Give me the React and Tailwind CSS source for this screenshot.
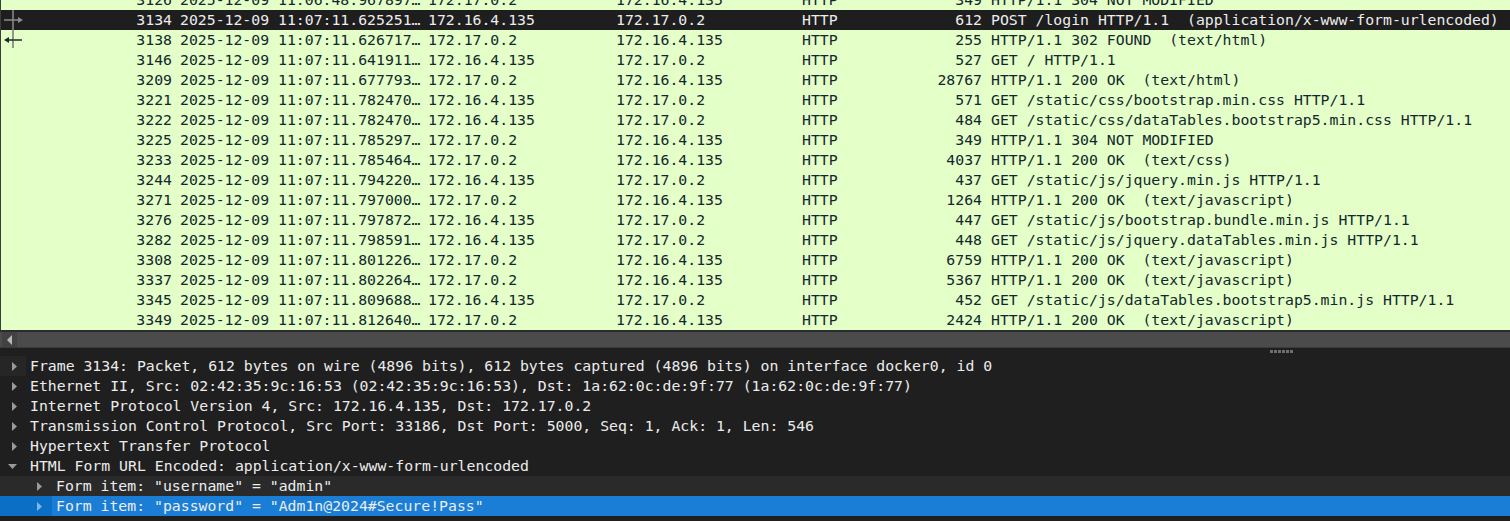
const MONO = "font-['DejaVu_Sans_Mono','Liberation_Mono',monospace] text-[14.8px]";

const A = "172.16.4.135";
const B = "172.17.0.2";

const packets = [
  { no: 3126, time: "2025-12-09 11:06:48.967897…", src: B, dst: A, len: 349, info: "HTTP/1.1 304 NOT MODIFIED" },
  { no: 3134, time: "2025-12-09 11:07:11.625251…", src: A, dst: B, len: 612, info: "POST /login HTTP/1.1  (application/x-www-form-urlencoded)", selected: true, mark: "out" },
  { no: 3138, time: "2025-12-09 11:07:11.626717…", src: B, dst: A, len: 255, info: "HTTP/1.1 302 FOUND  (text/html)", mark: "in" },
  { no: 3146, time: "2025-12-09 11:07:11.641911…", src: A, dst: B, len: 527, info: "GET / HTTP/1.1" },
  { no: 3209, time: "2025-12-09 11:07:11.677793…", src: B, dst: A, len: 28767, info: "HTTP/1.1 200 OK  (text/html)" },
  { no: 3221, time: "2025-12-09 11:07:11.782470…", src: A, dst: B, len: 571, info: "GET /static/css/bootstrap.min.css HTTP/1.1" },
  { no: 3222, time: "2025-12-09 11:07:11.782470…", src: A, dst: B, len: 484, info: "GET /static/css/dataTables.bootstrap5.min.css HTTP/1.1" },
  { no: 3225, time: "2025-12-09 11:07:11.785297…", src: B, dst: A, len: 349, info: "HTTP/1.1 304 NOT MODIFIED" },
  { no: 3233, time: "2025-12-09 11:07:11.785464…", src: B, dst: A, len: 4037, info: "HTTP/1.1 200 OK  (text/css)" },
  { no: 3244, time: "2025-12-09 11:07:11.794220…", src: A, dst: B, len: 437, info: "GET /static/js/jquery.min.js HTTP/1.1" },
  { no: 3271, time: "2025-12-09 11:07:11.797000…", src: B, dst: A, len: 1264, info: "HTTP/1.1 200 OK  (text/javascript)" },
  { no: 3276, time: "2025-12-09 11:07:11.797872…", src: A, dst: B, len: 447, info: "GET /static/js/bootstrap.bundle.min.js HTTP/1.1" },
  { no: 3282, time: "2025-12-09 11:07:11.798591…", src: A, dst: B, len: 448, info: "GET /static/js/jquery.dataTables.min.js HTTP/1.1" },
  { no: 3308, time: "2025-12-09 11:07:11.801226…", src: B, dst: A, len: 6759, info: "HTTP/1.1 200 OK  (text/javascript)" },
  { no: 3337, time: "2025-12-09 11:07:11.802264…", src: B, dst: A, len: 5367, info: "HTTP/1.1 200 OK  (text/javascript)" },
  { no: 3345, time: "2025-12-09 11:07:11.809688…", src: A, dst: B, len: 452, info: "GET /static/js/dataTables.bootstrap5.min.js HTTP/1.1" },
  { no: 3349, time: "2025-12-09 11:07:11.812640…", src: B, dst: A, len: 2424, info: "HTTP/1.1 200 OK  (text/javascript)" },
];

const details = [
  { text: "Frame 3134: Packet, 612 bytes on wire (4896 bits), 612 bytes captured (4896 bits) on interface docker0, id 0", gutter: true },
  { text: "Ethernet II, Src: 02:42:35:9c:16:53 (02:42:35:9c:16:53), Dst: 1a:62:0c:de:9f:77 (1a:62:0c:de:9f:77)" },
  { text: "Internet Protocol Version 4, Src: 172.16.4.135, Dst: 172.17.0.2" },
  { text: "Transmission Control Protocol, Src Port: 33186, Dst Port: 5000, Seq: 1, Ack: 1, Len: 546" },
  { text: "Hypertext Transfer Protocol" },
  { text: "HTML Form URL Encoded: application/x-www-form-urlencoded", open: true },
  { text: 'Form item: "username" = "admin"', child: true, soft: true },
  { text: 'Form item: "password" = "Adm1n@2024#Secure!Pass"', child: true, selected: true },
];

// related-packet marker drawn in the first column
function Marker({ kind }) {
  if (kind === "out") {
    return (
      <svg width="26" height="20" className="shrink-0">
        <line x1="12" y1="0" x2="12" y2="20" stroke="#8c8c8c" strokeWidth="1.5" />
        <line x1="3" y1="10" x2="18" y2="10" stroke="#8c8c8c" strokeWidth="1.5" />
        <path d="M17 7 L22 10 L17 13 Z" fill="#8c8c8c" />
      </svg>
    );
  }
  if (kind === "in") {
    return (
      <svg width="26" height="20" className="shrink-0">
        <line x1="12" y1="0" x2="12" y2="18" stroke="#6e7a76" strokeWidth="1.5" />
        <line x1="5" y1="10" x2="21" y2="10" stroke="#1b2a2c" strokeWidth="1.5" />
        <path d="M8 7 L3 10 L8 13 Z" fill="#1b2a2c" />
      </svg>
    );
  }
  return <span className="w-[26px] shrink-0" />;
}

function PacketRow({ p }) {
  return (
    <div
      className={`flex h-5 items-center whitespace-pre leading-5 ${
        p.selected ? "bg-[#1e1e1e] text-[#ededed]" : "bg-[#e4ffc7] text-[#12272e]"
      }`}
    >
      <div className="flex w-[174px] shrink-0 items-center">
        <Marker kind={p.mark} />
        <span className="flex-1 pr-[3px] text-right">{p.no}</span>
      </div>
      <div className="w-[248px] shrink-0 overflow-hidden pl-[5px]">{p.time}</div>
      <div className="w-[188px] shrink-0 pl-[5px]">{p.src}</div>
      <div className="w-[186px] shrink-0 pl-[5px]">{p.dst}</div>
      <div className="w-[94px] shrink-0 pl-[5px]">HTTP</div>
      <div className="w-[95px] shrink-0 pr-[4px] text-right">{p.len}</div>
      <div className="flex-1 overflow-hidden pl-[5px]">{p.info}</div>
    </div>
  );
}

function Expander({ open, color }) {
  return open ? (
    <svg width="11" height="10" viewBox="0 0 11 10">
      <path d="M1 3 L10 3 L5.5 8 Z" fill={color} />
    </svg>
  ) : (
    <svg width="10" height="11" viewBox="0 0 10 11">
      <path d="M3 1 L8 5.5 L3 10 Z" fill={color} />
    </svg>
  );
}

function DetailRow({ d }) {
  const bg = d.selected ? "bg-[#0b6fc6]" : d.soft ? "bg-[#2a2a2a]" : "bg-[#1f1f1f]";
  return (
    <div className={`flex h-5 items-center whitespace-pre leading-5 text-[#ececec] ${bg}`}>
      <div className={`flex h-5 shrink-0 items-center ${d.child ? "w-[52px] pl-[34px]" : d.open ? "w-[26px] pl-[7px]" : "w-[26px] pl-[9px]"} ${d.gutter ? "bg-[#262626]" : ""}`}>
        <Expander open={d.open} color={d.selected ? "#7fb6ea" : "#9a9a9a"} />
      </div>
      <div className={`flex h-5 flex-1 items-center pl-[4px] ${d.selected ? "bg-[#1a7ed6]" : ""}`}>
        {d.text}
      </div>
    </div>
  );
}

export default function App() {
  return (
    <div className={`flex h-[521px] w-[1510px] flex-col overflow-hidden bg-[#1f1f1f] ${MONO}`}>
      {/* packet list */}
      <div className="h-[330px] shrink-0 overflow-hidden border-l border-[#3c3c3c] bg-[#e4ffc7]">
        <div className="-mt-[10px]">
          {packets.map((p) => (
            <PacketRow key={p.no} p={p} />
          ))}
        </div>
      </div>

      {/* horizontal scrollbar */}
      <div className="h-[2px] shrink-0 bg-[#2c2c2c]" />
      <div className="flex h-[15px] shrink-0 items-stretch bg-[#4b4b4b] pl-[2px]">
        <div className="flex w-[15px] items-center justify-center bg-[#424242]">
          <svg width="6" height="10" viewBox="0 0 6 10">
            <path d="M5 0 L0 5 L5 10 Z" fill="#b8b8b8" />
          </svg>
        </div>
      </div>
      <div className="h-px shrink-0 bg-[#3a3a3a]" />

      {/* splitter */}
      <div className="flex h-[8px] shrink-0 items-start justify-end pr-[217px] pt-[2px]">
        <div className="flex gap-[1px]">
          {[0, 1, 2, 3, 4, 5].map((i) => (
            <span key={i} className="h-[3px] w-[3px] bg-[#6e6e6e]" />
          ))}
        </div>
      </div>

      {/* packet details */}
      <div className="flex-1">
        {details.map((d, i) => (
          <DetailRow key={i} d={d} />
        ))}
      </div>
    </div>
  );
}
